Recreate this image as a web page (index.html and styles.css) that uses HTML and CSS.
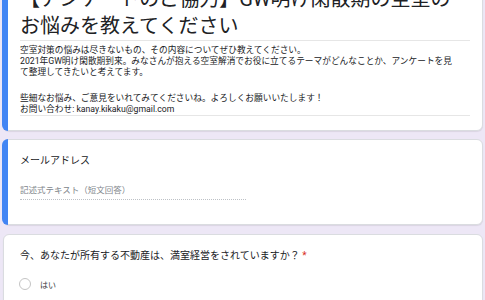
FILE: index.html
```html
<!DOCTYPE html>
<html lang="ja">
<head>
<meta charset="utf-8">
<link rel="stylesheet" href="styles.css">
</head>
<body>
<main class="form">
  <section class="card card-title focused">
    <h1 class="title">【アンケートのご協力】GW明け閑散期の空室の<br>お悩みを教えてください</h1>
    <div class="desc">
      <p>空室対策の悩みは尽きないもの、その内容についてぜひ教えてください。</p>
      <p>2021年GW明け閑散期到来。みなさんが抱える空室解消でお役に立てるテーマがどんなことか、アンケートを見<br>て整理してきたいと考えてます。</p>
      <p class="gap">些細なお悩み、ご意見をいれてみてくださいね。よろしくお願いいたします！</p>
      <p>お問い合わせ: kanay.kikaku@gmail.com</p>
    </div>
  </section>
  <section class="card card-email focused">
    <div class="label">メールアドレス</div>
    <div class="placeholder">記述式テキスト（短文回答）</div>
  </section>
  <section class="card card-question">
    <div class="label">今、あなたが所有する不動産は、満室経営をされていますか？ <span class="req">*</span></div>
    <label class="option"><span class="radio"></span><span class="opt-text">はい</span></label>
  </section>
</main>
</body>
</html>
```
FILE: styles.css
```css
html, body {
  margin: 0;
  padding: 0;
}
body {
  background: #ede7f6;
  font-family: Roboto, "Noto Sans CJK JP", sans-serif;
  color: #202124;
  overflow: hidden;
}
.form {
  display: flex;
  flex-direction: column;
  gap: 8px;
  padding: 0 2px 0 3px;
}
.card {
  position: relative;
  background: #fff;
  border: 1px solid #dadce0;
  border-radius: 6px;
  padding: 0 12px 0 16px;
  box-shadow: 0 1px 1px rgba(0,0,0,0.08);
}
.focused::before {
  content: "";
  position: absolute;
  left: -2px;
  top: -1px;
  bottom: -1px;
  width: 6px;
  background: #4285f4;
  border-radius: 6px 0 0 6px;
}
.card-title {
  margin-top: -25px;
  padding-top: 10px;
  padding-bottom: 14px;
}
.title {
  margin: 0;
  font-size: 20px;
  font-weight: 400;
  line-height: 27px;
  white-space: nowrap;
  border-bottom: 1px solid #e6e6e6;
}
.desc {
  margin-top: 4px;
  font-size: 8.7px;
  line-height: 11px;
  white-space: nowrap;
  border-bottom: 1px solid #e6e6e6;
}
.desc p {
  margin: 0;
}
.desc .gap {
  margin-top: 15px;
}
.card-email {
  padding-top: 14px;
  padding-bottom: 24px;
}
.label {
  font-size: 10px;
  line-height: 14px;
}
.placeholder {
  margin-top: 16px;
  width: 226px;
  font-size: 8.5px;
  line-height: 12px;
  color: #80868b;
  padding-bottom: 3px;
  border-bottom: 1px dotted #bdc1c6;
}
.card-question {
  margin-top: 1px;
  padding-top: 14px;
  padding-bottom: 20px;
}
.req {
  color: #d93025;
}
.option {
  display: flex;
  align-items: center;
  gap: 9px;
  margin-top: 14px;
  height: 14px;
  margin-left: -1px;
}
.radio {
  width: 10px;
  height: 10px;
  border: 1.5px solid #c4c4c4;
  border-radius: 50%;
}
.opt-text {
  font-size: 8px;
  color: #3c4043;
}
```
